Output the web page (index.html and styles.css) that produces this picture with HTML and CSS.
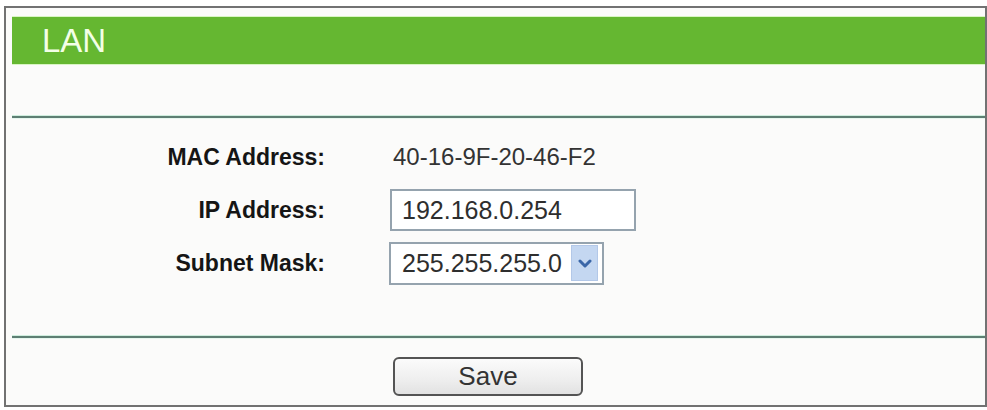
FILE: index.html
```html
<!DOCTYPE html>
<html lang="en">
<head>
<meta charset="utf-8">
<title>LAN</title>
<link rel="stylesheet" href="styles.css">
</head>
<body>
<div class="panel">
  <div class="title-bar"><h1 class="title">LAN</h1></div>
  <hr class="divider divider-top">
  <form class="lan-form" onsubmit="return false">
    <label class="field-label">MAC Address:</label>
    <div class="field-value mac">40-16-9F-20-46-F2</div>

    <label class="field-label" for="ip">IP Address:</label>
    <div class="field-value"><input id="ip" class="text-input" type="text" value="192.168.0.254"></div>

    <label class="field-label" for="mask">Subnet Mask:</label>
    <div class="field-value">
      <div class="select-box">
        <select id="mask" class="select-native">
          <option>255.255.255.0</option>
        </select>
        <span class="select-arrow">
          <svg width="14" height="9" viewBox="0 0 14 9"><path d="M2 2 L7 7 L12 2" fill="none" stroke="#3a66a8" stroke-width="3" stroke-linecap="round" stroke-linejoin="round"/></svg>
        </span>
      </div>
    </div>
  </form>
  <hr class="divider divider-bottom">
  <div class="actions">
    <div class="actions-spacer"></div>
    <button class="save-btn" type="button">Save</button>
  </div>
</div>
</body>
</html>
```

FILE: styles.css
```css
html, body {
  margin: 0;
  padding: 0;
  background: #ffffff;
}

body {
  font-family: "Liberation Sans", Arial, sans-serif;
}

.panel {
  box-sizing: border-box;
  margin: 6px 0 0 4px;
  width: 983px;
  height: 401px;
  border: 2px solid #727272;
  background: #fbfbfa;
  padding: 9px 0 0 6px;
  display: flex;
  flex-direction: column;
}

.title-bar {
  height: 47px;
  background: #65b731;
  box-shadow: 0 -1px 0 #d9f5c4, 0 1px 0 #d9f5c4;
  padding-left: 30px;
  display: flex;
  align-items: center;
}

.title {
  margin: 0;
  font-size: 33px;
  font-weight: normal;
  line-height: 47px;
  color: #f3ffe6;
}

.divider {
  margin: 0;
  height: 2px;
  border: 0;
  background: #5d7f73;
  box-shadow: 0 -1px 0 #cfeede, 0 1px 0 #e6f6ee;
}

.divider-top {
  margin-top: 52px;
}

.divider-bottom {
  margin-top: 51px;
}

.lan-form {
  margin: 0;
  padding-top: 18px;
  display: grid;
  grid-template-columns: 313px 1fr;
  grid-template-rows: 42px 42px 43px;
  column-gap: 65px;
  row-gap: 11px;
}

.field-label {
  text-align: right;
  font-size: 23px;
  font-weight: bold;
  color: #151515;
  align-self: center;
}

.field-value {
  display: flex;
  align-items: center;
}

.mac {
  padding-left: 3px;
  font-size: 24px;
  color: #333333;
}

.text-input {
  box-sizing: border-box;
  width: 246px;
  height: 42px;
  margin: 0;
  border: 2px solid #95a3ae;
  background: #ffffff;
  padding: 0 0 0 10px;
  font-family: "Liberation Sans", Arial, sans-serif;
  font-size: 25px;
  color: #2e2e2e;
  outline: none;
}

.select-box {
  box-sizing: border-box;
  margin-left: -1px;
  width: 215px;
  height: 43px;
  border: 2px solid #95a3ae;
  background: #ffffff;
  display: flex;
  align-items: stretch;
  padding: 1px 4px 2px 0;
}

.select-native {
  flex: 1;
  min-width: 0;
  appearance: none;
  -webkit-appearance: none;
  border: 0;
  background: transparent;
  padding: 0 0 0 11px;
  margin: 0;
  font-family: "Liberation Sans", Arial, sans-serif;
  font-size: 25px;
  color: #2e2e2e;
  outline: none;
}

.select-arrow {
  width: 27px;
  background: #c4d7f1;
  border: 1px solid #b3c8e8;
  box-sizing: border-box;
  display: flex;
  align-items: center;
  justify-content: center;
}

.actions {
  padding-top: 19px;
  display: grid;
  grid-template-columns: 313px 1fr;
  column-gap: 65px;
}

.save-btn {
  justify-self: start;
  margin-left: 3px;
  box-sizing: border-box;
  width: 190px;
  height: 39px;
  border: 2px solid #545454;
  border-radius: 6px;
  background: linear-gradient(#fbfbfb, #eeeeee 60%, #e2e2e2);
  font-family: "Liberation Sans", Arial, sans-serif;
  font-size: 26px;
  color: #333333;
  padding: 0;
  line-height: 35px;
}
```
